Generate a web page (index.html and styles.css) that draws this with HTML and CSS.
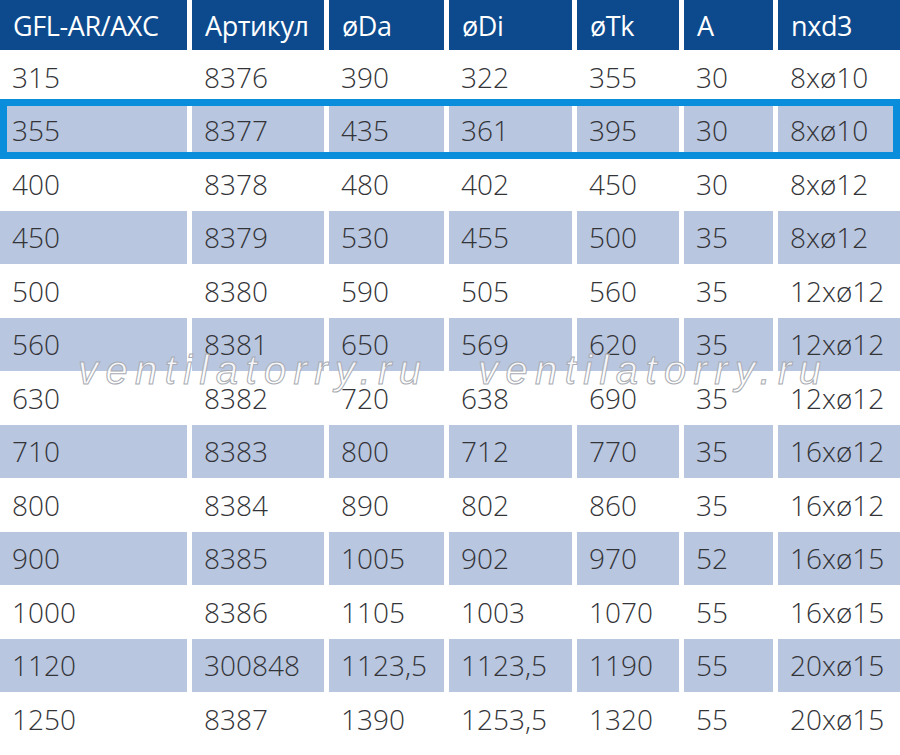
FILE: index.html
```html
<!DOCTYPE html>
<html lang="ru">
<head>
<meta charset="utf-8">
<title>GFL-AR/AXC</title>
<link rel="stylesheet" href="styles.css">
</head>
<body>
<div class="sheet">
  <div class="row head">
    <div class="cell">GFL-AR/AXC</div>
    <div class="cell">Артикул</div>
    <div class="cell">øDa</div>
    <div class="cell">øDi</div>
    <div class="cell">øTk</div>
    <div class="cell">A</div>
    <div class="cell">nxd3</div>
  </div>
  <div class="row"><div class="cell">315</div><div class="cell">8376</div><div class="cell">390</div><div class="cell">322</div><div class="cell">355</div><div class="cell">30</div><div class="cell">8xø10</div></div>
  <div class="row alt selected"><div class="cell">355</div><div class="cell">8377</div><div class="cell">435</div><div class="cell">361</div><div class="cell">395</div><div class="cell">30</div><div class="cell">8xø10</div></div>
  <div class="row"><div class="cell">400</div><div class="cell">8378</div><div class="cell">480</div><div class="cell">402</div><div class="cell">450</div><div class="cell">30</div><div class="cell">8xø12</div></div>
  <div class="row alt"><div class="cell">450</div><div class="cell">8379</div><div class="cell">530</div><div class="cell">455</div><div class="cell">500</div><div class="cell">35</div><div class="cell">8xø12</div></div>
  <div class="row"><div class="cell">500</div><div class="cell">8380</div><div class="cell">590</div><div class="cell">505</div><div class="cell">560</div><div class="cell">35</div><div class="cell">12xø12</div></div>
  <div class="row alt"><div class="cell">560</div><div class="cell">8381</div><div class="cell">650</div><div class="cell">569</div><div class="cell">620</div><div class="cell">35</div><div class="cell">12xø12</div></div>
  <div class="row"><div class="cell">630</div><div class="cell">8382</div><div class="cell">720</div><div class="cell">638</div><div class="cell">690</div><div class="cell">35</div><div class="cell">12xø12</div></div>
  <div class="row alt"><div class="cell">710</div><div class="cell">8383</div><div class="cell">800</div><div class="cell">712</div><div class="cell">770</div><div class="cell">35</div><div class="cell">16xø12</div></div>
  <div class="row"><div class="cell">800</div><div class="cell">8384</div><div class="cell">890</div><div class="cell">802</div><div class="cell">860</div><div class="cell">35</div><div class="cell">16xø12</div></div>
  <div class="row alt"><div class="cell">900</div><div class="cell">8385</div><div class="cell">1005</div><div class="cell">902</div><div class="cell">970</div><div class="cell">52</div><div class="cell">16xø15</div></div>
  <div class="row"><div class="cell">1000</div><div class="cell">8386</div><div class="cell">1105</div><div class="cell">1003</div><div class="cell">1070</div><div class="cell">55</div><div class="cell">16xø15</div></div>
  <div class="row alt"><div class="cell">1120</div><div class="cell">300848</div><div class="cell">1123,5</div><div class="cell">1123,5</div><div class="cell">1190</div><div class="cell">55</div><div class="cell">20xø15</div></div>
  <div class="row"><div class="cell">1250</div><div class="cell">8387</div><div class="cell">1390</div><div class="cell">1253,5</div><div class="cell">1320</div><div class="cell">55</div><div class="cell">20xø15</div></div>

  <div class="watermark">
    <span class="mark">ventilatorry.ru</span>
    <span class="mark">ventilatorry.ru</span>
  </div>
</div>
</body>
</html>
```

FILE: styles.css
```css
html, body {
  margin: 0;
  padding: 0;
  background: #ffffff;
}

.sheet {
  position: relative;
  width: 900px;
  height: 755px;
  overflow: hidden;
  font-family: "Open Sans", "Noto Sans", sans-serif;
}

.row {
  display: grid;
  grid-template-columns: 187px 132px 115px 123px 102px 89px 122px;
  column-gap: 5px;
  height: 53.5px;
}

.cell {
  display: flex;
  align-items: center;
  padding-left: 12px;
  font-size: 28px;
  font-weight: 300;
  color: #333438;
  white-space: nowrap;
}

.head {
  height: 50px;
}

.head .cell {
  background: #0c4a8d;
  color: #ffffff;
  font-weight: 500;
  font-size: 27px;
  font-stretch: 93%;
  letter-spacing: -0.4px;
  padding-left: 13px;
}

.alt .cell {
  background: #b9c6df;
}

.selected {
  position: relative;
}

.selected::after {
  content: "";
  position: absolute;
  left: 0;
  right: 0;
  top: -4.5px;
  bottom: -1.5px;
  border: 7px solid #0a8edc;
  pointer-events: none;
}

.watermark {
  position: absolute;
  left: 0;
  top: 348px;
  width: 900px;
  pointer-events: none;
}

.mark {
  position: absolute;
  top: 0;
  font-family: "Liberation Sans", Arial, sans-serif;
  font-style: italic;
  font-size: 40px;
  letter-spacing: 7.4px;
  color: rgba(255, 255, 255, 0.85);
  -webkit-text-stroke: 1px #a8abb2;
}

.mark:first-child {
  left: 78px;
}

.mark:last-child {
  left: 478px;
}
```
